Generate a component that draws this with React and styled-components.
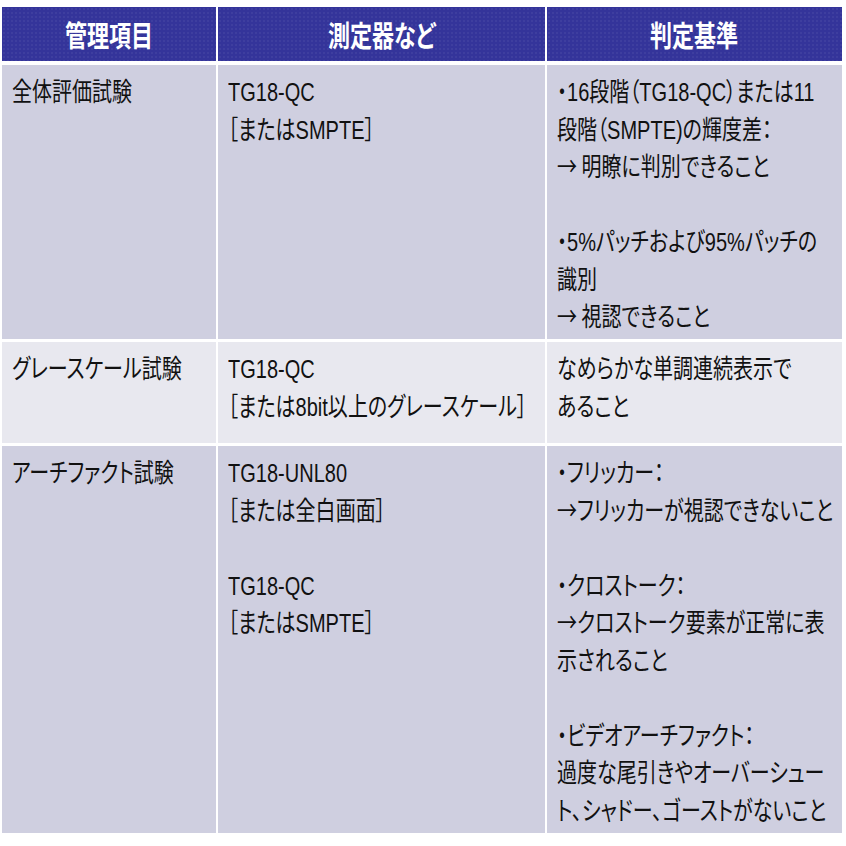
import React from "react";
import styled, { createGlobalStyle } from "styled-components";

const GlobalStyle = createGlobalStyle`
  body {
    margin: 0;
    background: #ffffff;
    font-family: "Liberation Sans", "Noto Sans CJK JP", sans-serif;
  }
`;

const Table = styled.div`
  width: 840px;
  margin: 7px 0 0 2px;
  display: flex;
  flex-direction: column;
  gap: 3px;
  background: #ffffff;
`;

const Row = styled.div`
  display: grid;
  grid-template-columns: 214px 327px 295px;
  column-gap: 2px;
  height: ${(p) => p.$height}px;
  margin-bottom: ${(p) => (p.$head ? "1px" : "0")};
`;

const HeadCell = styled.div`
  background: #34349a;
  background-image: radial-gradient(rgba(255, 255, 255, 0.05) 1px, transparent 1px);
  background-size: 4px 4px;
  display: flex;
  align-items: center;
  justify-content: center;
  overflow: hidden;
`;

const HeadText = styled.span`
  color: #ffffff;
  font-size: 29px;
  font-weight: 700;
  font-feature-settings: "palt";
  white-space: nowrap;
  transform: scaleX(0.76);
  transform-origin: center;
`;

const Cell = styled.div`
  background: ${(p) => (p.$light ? "#e8e8ef" : "#cfcfe0")};
  padding: 9px 0 0 10px;
  overflow: hidden;
`;

const CellText = styled.div`
  color: #111111;
  font-size: 26px;
  line-height: 37.5px;
  font-feature-settings: "palt";
  white-space: pre;
  transform: scaleX(0.77);
  transform-origin: 0 0;
`;

// lines that open with an arrow are all-Japanese; set them in the CJK face
// so the arrow isn't the tiny Liberation Sans one
const ArrowLine = styled.span`
  font-family: "Noto Sans CJK JP", sans-serif;
  line-height: 0;
`;

const headers = ["管理項目", "測定器など", "判定基準"];

const rows = [
  {
    height: 274,
    cells: [
      "全体評価試験",
      "TG18-QC\n［またはSMPTE］",
      "・16段階（TG18-QC）または11\n段階（SMPTE)の輝度差：\n→ 明瞭に判別できること\n\n・5%パッチおよび95%パッチの\n識別\n→ 視認できること",
    ],
  },
  {
    height: 101,
    light: true,
    cells: [
      "グレースケール試験",
      "TG18-QC\n［または8bit以上のグレースケール］",
      "なめらかな単調連続表示で\nあること",
    ],
  },
  {
    height: 387,
    cells: [
      "アーチファクト試験",
      "TG18-UNL80\n［または全白画面］\n\nTG18-QC\n［またはSMPTE］",
      "・フリッカー：\n→フリッカーが視認できないこと\n\n・クロストーク：\n→クロストーク要素が正常に表\n示されること\n\n・ビデオアーチファクト：\n過度な尾引きやオーバーシュー\nト、シャドー、ゴーストがないこと",
    ],
  },
];

const renderLines = (text) =>
  text.split("\n").map((line, i) => (
    <React.Fragment key={i}>
      {i > 0 && "\n"}
      {line.startsWith("→") ? <ArrowLine>{line}</ArrowLine> : line}
    </React.Fragment>
  ));

export default function App() {
  return (
    <>
      <GlobalStyle />
      <Table>
        <Row $height={54} $head>
          {headers.map((h) => (
            <HeadCell key={h}>
              <HeadText>{h}</HeadText>
            </HeadCell>
          ))}
        </Row>
        {rows.map((r, i) => (
          <Row key={i} $height={r.height}>
            {r.cells.map((c, j) => (
              <Cell key={j} $light={r.light}>
                <CellText>{renderLines(c)}</CellText>
              </Cell>
            ))}
          </Row>
        ))}
      </Table>
    </>
  );
}
